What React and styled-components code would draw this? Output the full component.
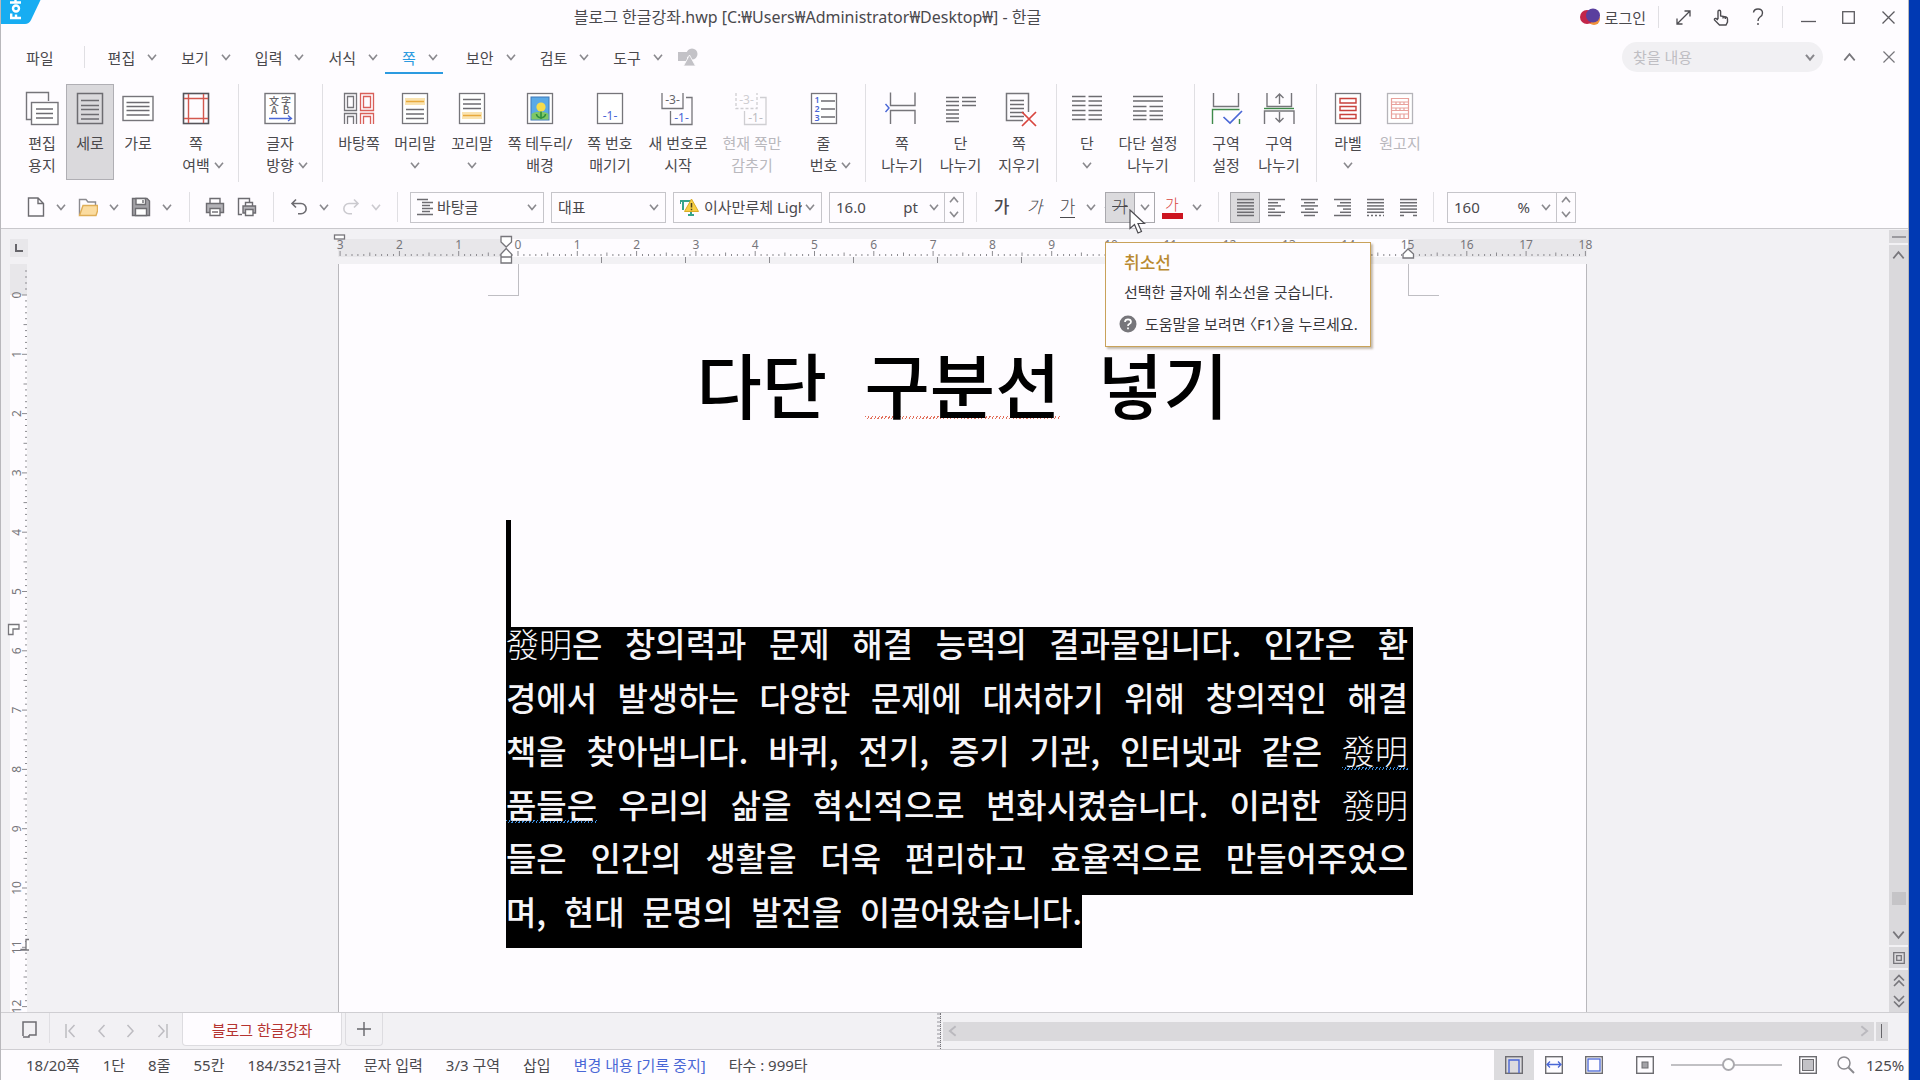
import React from "react";
import styled, { createGlobalStyle, css } from "styled-components";

const color = {
  chrome: "#fefcff",
  canvas: "#f2f1f4",
  line: "#d3d2d6",
  edge: "#b9b8bc",
  text: "#4a494d",
  faint: "#b9b8bd",
  icon: "#6d6c71",
  blue: "#2c9be0",
  ink: "#4a67d6",
  red: "#d8453e",
  track: "#dad9dc",
};

const GlobalStyle = createGlobalStyle`
  * { box-sizing: border-box; }
  body { margin: 0; background: #0039b3; overflow: hidden; }
  body, button, input, select {
    font-family: "Noto Sans", "Noto Sans CJK KR", sans-serif;
    font-size: 15px;
    color: ${color.text};
  }
  button, input, select { border: 0; margin: 0; padding: 0; background: none; outline: none; }
  svg { display: block; flex: none; }
`;

const Desktop = styled.div`
  height: 100vh;
  padding-right: 11px;
  background: #0039b3;
`;
const Window = styled.main`
  height: 100%;
  display: flex;
  flex-direction: column;
  background: ${color.chrome};
  border-left: 1px solid ${color.edge};
  border-right: 1px solid ${color.edge};
`;

/* ---------- title bar ---------- */
const TitleBar = styled.header`
  height: 34px;
  display: grid;
  grid-template-columns: 1fr auto 1fr;
  align-items: center;
`;
const AppTitle = styled.h1`
  margin: 0;
  padding-right: 294px;
  font-size: 16px;
  font-weight: 400;
  line-height: 32px;
  white-space: nowrap;
`;
const LogoLink = styled.a`
  align-self: start;
  width: 40px;
`;
const TitleTools = styled.div`
  display: flex;
  align-items: center;
  justify-content: flex-end;
`;
const IconButton = styled.button`
  display: flex;
  align-items: center;
  justify-content: center;
  width: ${(p) => p.$w || 39}px;
  height: ${(p) => p.$h || 30}px;
`;
const LoginButton = styled.button`
  display: flex;
  align-items: center;
  gap: 5px;
  padding-right: 12px;
`;
const Divider = styled.span`
  flex: none;
  width: 1px;
  height: ${(p) => p.$h || 22}px;
  margin: 0 ${(p) => p.$r || 0}px 0 ${(p) => p.$l || 0}px;
  background: #e0dfe3;
`;

/* ---------- menu bar ---------- */
const MenuBar = styled.nav`
  height: 49px;
  display: flex;
  align-items: center;
  padding: 0 0 3px 25px;
`;
const MenuItem = styled.button`
  position: relative;
  display: flex;
  align-items: center;
  gap: 12px;
  height: 34px;
  min-width: 64px;
  padding: 0 7px 0 17px;
  ${(p) =>
    p.$active &&
    css`
      color: ${color.blue};
      &::after {
        content: "";
        position: absolute;
        left: 0;
        right: 6px;
        bottom: 0;
        height: 2px;
        background: ${color.blue};
      }
    `}
`;
const FileItem = styled.button`
  padding-right: 30px;
  height: 34px;
`;
const SearchBox = styled.label`
  display: flex;
  align-items: center;
  width: 201px;
  height: 30px;
  margin: 0 6px 0 auto;
  padding: 0 8px 0 11px;
  border-radius: 15px;
  background: #f1f0f3;
`;
const SearchInput = styled.input`
  flex: 1;
  min-width: 0;
  &::placeholder { color: #bfbec3; opacity: 1; }
`;

/* ---------- ribbon ---------- */
const Ribbon = styled.div`
  height: 101px;
  display: flex;
  align-items: flex-start;
  padding: 1px 0 0 17px;
`;
const RibbonButton = styled.button`
  flex: none;
  width: ${(p) => p.$w}px;
  height: 96px;
  display: flex;
  flex-direction: column;
  align-items: center;
  padding-top: 5px;
  border: 1px solid ${(p) => (p.$on ? "#b0afb4" : "transparent")};
  background: ${(p) => (p.$on ? "#dad9dc" : "transparent")};
  color: ${(p) => (p.disabled ? color.faint : color.text)};
  white-space: nowrap;
`;
const RibbonLine = styled.span`
  display: flex;
  align-items: center;
  justify-content: center;
  gap: 4px;
  height: 22px;
  line-height: 22px;
  padding-left: ${(p) => (p.$hang ? 14 : 0)}px;
`;
const RibbonIcon = styled.svg`
  width: 34px;
  height: 36px;
  margin-bottom: 6px;
`;
const RibbonRule = styled.span`
  flex: none;
  width: 1px;
  height: 98px;
  margin: 0 7px 0 8px;
  background: #e0dfe3;
`;

/* ---------- format bar ---------- */
const FormatBar = styled.div`
  height: 45px;
  display: flex;
  align-items: center;
  padding: 2px 0 0 19px;
  border-bottom: 1px solid #c9c8cc;
`;
const ToolButton = styled.button`
  flex: none;
  display: flex;
  align-items: center;
  justify-content: center;
  width: ${(p) => p.$w}px;
  height: ${(p) => (p.$on || p.$split ? 31 : 30)}px;
  border: 1px solid ${(p) => (p.$on || p.$split ? "#a9a8ad" : "transparent")};
  border-left-width: ${(p) => (p.$split ? 0 : 1)}px;
  background: ${(p) => (p.$on ? "#dbdadd" : "transparent")};
  font-size: 17px;
  font-weight: ${(p) => p.$weight || 400};
  font-style: ${(p) => (p.$italic ? "italic" : "normal")};
  line-height: 20px;
`;
const Field = styled.label`
  flex: none;
  display: flex;
  align-items: center;
  gap: ${(p) => p.$gap || 4}px;
  width: ${(p) => p.$w}px;
  height: 31px;
  padding-left: 6px;
  margin-right: ${(p) => p.$r || 0}px;
  border: 1px solid #c6c5ca;
`;
const FieldSelect = styled.select`
  appearance: none;
  flex: 1;
  min-width: 0;
  height: 29px;
  white-space: nowrap;
  overflow: hidden;
  text-overflow: clip;
`;
const FieldInput = styled.input`
  flex: 1;
  min-width: 0;
`;
const Unit = styled.span`
  margin-right: 6px;
`;
const ChevronSlot = styled.span`
  display: flex;
  justify-content: center;
  flex: none;
  width: ${(p) => (p.$tight ? 12 : 22)}px;
  margin-left: ${(p) => (p.$tight ? 0 : -8)}px;
`;
const Spinner = styled.span`
  flex: none;
  display: flex;
  flex-direction: column;
  justify-content: space-around;
  width: 19px;
  height: 29px;
  border-left: 1px solid #c6c5ca;
`;
const SpinButton = styled.button`
  display: flex;
  justify-content: center;
`;
const UnderGlyph = styled.span`
  border-bottom: 1px solid ${color.text};
`;
const StrikeGlyph = styled.span`
  text-decoration: line-through;
`;
const ColorGlyph = styled.span`
  width: 21px;
  border-bottom: 6px solid #cc1420;
  color: ${color.red};
  font-size: 15px;
  line-height: 18px;
`;

/* ---------- workspace ---------- */
const Workspace = styled.section`
  flex: 1;
  min-height: 0;
  display: grid;
  grid-template-columns: 28px 1fr 19px;
  grid-template-rows: 35px 1fr;
  background: ${color.canvas};
`;
const Corner = styled.div`
  display: flex;
  align-items: flex-start;
  padding: 10px 0 0 9px;
`;
const RulerStrip = styled.div`
  display: flex;
  justify-content: center;
  padding-left: 7px;
  overflow: hidden;
`;
const SideRuler = styled.div`
  min-height: 0;
  overflow: hidden;
`;
const Canvas = styled.div`
  min-height: 0;
  display: flex;
  justify-content: center;
  padding-left: 7px;
  overflow: hidden;
`;
const Page = styled.article`
  width: 1249px;
  background: ${color.chrome};
  border-left: 1px solid ${color.edge};
  border-right: 1px solid ${color.edge};
`;
const MarginMarks = styled.div`
  display: flex;
  justify-content: space-between;
  padding: 0 147px 0 149px;
`;
const MarginMark = styled.span`
  width: 31px;
  height: 32px;
  border: solid #bfbec3;
  border-width: ${(p) => (p.$end ? "0 0 1px 1px" : "0 1px 1px 0")};
`;
const docFont = css`
  font-family: "Noto Sans CJK KR", sans-serif;
  font-weight: 500;
`;
const DocTitle = styled.h2`
  ${docFont}
  width: 532px;
  margin: 46px auto 98px;
  font-size: 71px;
  line-height: 80px;
  color: #000;
  text-align: justify;
  text-align-last: justify;
  white-space: nowrap;
`;
const Squiggle = styled.span`
  background: repeating-linear-gradient(
      120deg,
      ${(p) => p.$tone} 0 1px,
      transparent 1px 3px
    )
    0 ${(p) => p.$at} / 100% 3px no-repeat;
`;
const TextColumn = styled.div`
  width: 907px;
  margin-left: 167px;
`;
const Caret = styled.div`
  width: 5px;
  height: 107px;
  background: #000;
`;
const Paragraph = styled.div`
  ${docFont}
  height: 321px;
  display: grid;
  grid-template-rows: repeat(6, 1fr);
  font-size: 33px;
  line-height: 32px;
  color: #f6f5f8;
`;
const TextLine = styled.div`
  width: ${(p) => (p.$short ? "576px" : "100%")};
  padding-right: ${(p) => (p.$short ? 0 : 5)}px;
  background: #000;
  text-align: justify;
  text-align-last: justify;
  white-space: nowrap;
`;
const Hanja = styled.span`
  display: inline-block;
  font-weight: 300;
  text-align-last: left;
`;

/* ---------- vertical scroll ---------- */
const ScrollColumn = styled.aside`
  grid-column: 3;
  grid-row: 1 / 3;
  display: flex;
  flex-direction: column;
  gap: 2px;
  padding-top: 1px;
`;
const ScrollCell = styled.button`
  display: flex;
  align-items: center;
  justify-content: center;
  height: ${(p) => p.$h}px;
  background: ${color.track};
`;
const ScrollTrack = styled.div`
  flex: 1;
  display: flex;
  flex-direction: column;
  background: ${color.track};
`;
const ScrollThumb = styled.span`
  width: 14px;
  height: 13px;
  margin: auto auto 18px;
  background: #c5c4c7;
`;
const PageSteps = styled.div`
  display: flex;
  flex-direction: column;
  background: ${color.track};
`;

/* ---------- tab strip ---------- */
const TabStrip = styled.div`
  height: 38px;
  display: grid;
  grid-template-columns: 936px 1fr;
  background: ${color.canvas};
  border-top: 1px solid #cfced2;
  border-bottom: 1px solid #cfced2;
`;
const TabGroup = styled.div`
  display: flex;
  align-items: flex-start;
  padding-left: 10px;
`;
const DocTab = styled.button`
  width: 160px;
  height: 33px;
  margin: 0 3px 0 5px;
  padding-top: 1px;
  border: 1px solid #dddce0;
  border-top: 0;
  border-radius: 0 0 4px 4px;
  background: ${color.chrome};
  color: #b53431;
`;
const AddTab = styled.button`
  display: flex;
  align-items: center;
  justify-content: center;
  width: 38px;
  height: 33px;
  border: 1px solid #dddce0;
  border-top: 0;
  border-radius: 0 0 4px 4px;
`;
const ScrollRow = styled.div`
  display: flex;
  align-items: center;
  padding-right: 20px;
`;
const Grip = styled.span`
  width: 4px;
  height: 36px;
  margin-right: 2px;
  background: repeating-linear-gradient(180deg, #c3c2c7 0 2px, ${color.canvas} 2px 4px);
  border-right: 1px dotted #77767b;
`;
const HScroll = styled.div`
  flex: 1;
  display: flex;
  justify-content: space-between;
  align-items: center;
  height: 19px;
  background: ${color.track};
`;
const SplitHandle = styled.button`
  display: flex;
  align-items: center;
  justify-content: center;
  width: 12px;
  height: 19px;
  margin-left: 2px;
  background: ${color.track};
`;

/* ---------- status bar ---------- */
const StatusBar = styled.footer`
  height: 30px;
  display: flex;
  align-items: center;
  padding-left: 25px;
`;
const StatusList = styled.div`
  display: flex;
  gap: 23px;
  line-height: 30px;
  white-space: nowrap;
`;
const StatusText = styled.span`
  color: ${(p) => (p.$link ? "#4a67d6" : color.text)};
`;
const StatusTools = styled.div`
  display: flex;
  align-items: center;
  margin-left: auto;
  padding-right: 4px;
`;
const ViewButton = styled.button`
  display: flex;
  align-items: center;
  justify-content: center;
  width: ${(p) => p.$w || 40}px;
  height: 30px;
  background: ${(p) => (p.$on ? "#dcdbde" : "transparent")};
`;
const ZoomSlider = styled.input`
  appearance: none;
  width: 111px;
  height: 14px;
  margin: 0 8px 0 -5px;
  &::-webkit-slider-runnable-track { height: 2px; background: #c1c0c4; }
  &::-webkit-slider-thumb {
    appearance: none;
    width: 13px;
    height: 13px;
    margin-top: -6px;
    border: 2px solid #aaa9ae;
    border-radius: 50%;
    background: #fff;
  }
`;
const ZoomLabel = styled.output`
  width: 38px;
`;

/* ---------- tooltip and pointer ---------- */
const Anchor = styled.span`
  position: relative;
  display: flex;
`;
const Tooltip = styled.div`
  position: absolute;
  z-index: 2;
  top: 50px;
  left: 0;
  width: 266px;
  height: 105px;
  padding: 7px 12px 0 18px;
  border: 1px solid #c9a25a;
  background: ${color.chrome};
  box-shadow: 2px 2px 2px rgba(90, 70, 30, 0.35);
  line-height: 26px;
  white-space: nowrap;
`;
const TipTitle = styled.strong`
  display: block;
  font-size: 17px;
  font-weight: 500;
  color: #b98a30;
`;
const TipBody = styled.p`
  margin: 3px 0 6px;
  color: #38373a;
`;
const TipHelp = styled.p`
  display: flex;
  align-items: center;
  gap: 8px;
  margin: 0 0 0 -5px;
  color: #38373a;
  font-feature-settings: "halt";
`;
const Pointer = styled.svg`
  position: absolute;
  z-index: 3;
  top: 17px;
  left: 24px;
`;

/* ---------- shared glyphs ---------- */
const Chevron = ({ dir = "down", size = 10, tone = "#8a898e", weight = 1.6 }) => {
  const turn = { down: 0, left: 90, up: 180, right: 270 }[dir];
  return (
    <svg width={size} height={size} viewBox="0 0 10 10" fill="none" stroke={tone} strokeWidth={weight}>
      <path d="M1 2.8 L5 7.6 L9 2.8" transform={`rotate(${turn} 5 5)`} />
    </svg>
  );
};
const Cross = ({ size = 13, tone = "#5c5b60" }) => (
  <svg width={size} height={size} viewBox="0 0 13 13" stroke={tone} strokeWidth="1.3">
    <path d="M0.5 0.5 L12.5 12.5 M12.5 0.5 L0.5 12.5" />
  </svg>
);

const Rows = ({ x1, x2, ys, tone = color.icon }) => (
  <path d={ys.map((y) => `M${x1} ${y}H${x2}`).join("")} stroke={tone} strokeWidth="1.5" fill="none" />
);
const Sheet = ({ tone = "#76757a" }) => (
  <rect x="4.5" y="3.5" width="25" height="30" fill="#fff" stroke={tone} strokeWidth="1.3" />
);
const numeral = { fontSize: 12, fontFamily: "Noto Sans", textAnchor: "middle", stroke: "none" };

const ribbonArt = {
  paper: (
    <g fill="none" stroke="#76757a" strokeWidth="1.4">
      <path d="M7 29.5H1.5V2.5H23.5V11" />
      <rect x="6.5" y="12.5" width="26.5" height="22" fill="#fff" />
      <Rows x1={11} x2={28} ys={[19, 23.5, 28]} />
    </g>
  ),
  portrait: (
    <g>
      <rect x="4.5" y="3.5" width="25" height="30" fill="#dad9dc" stroke={color.icon} strokeWidth="1.5" />
      <Rows x1={8} x2={26} ys={[10.5, 15.5, 19.5, 24.5, 29]} />
    </g>
  ),
  landscape: (
    <g>
      <rect x="2" y="6.5" width="30" height="24" fill="#fff" stroke="#76757a" strokeWidth="1.4" />
      <Rows x1={5.5} x2={28.5} ys={[12.5, 16.5, 20.5, 25]} />
    </g>
  ),
  margins: (
    <g fill="none">
      <rect x="4.5" y="3.5" width="25" height="30" stroke="#55545a" strokeWidth="1.6" />
      <path d="M9.5 4V33M24.5 4V33M5 8.5H29M5 28.5H29" stroke="#d3584f" strokeWidth="1.4" />
    </g>
  ),
  direction: (
    <g>
      <rect x="2" y="3.5" width="30" height="30" fill="#fff" stroke="#76757a" strokeWidth="1.4" />
      <g style={{ fontSize: 10, fontFamily: "Noto Sans CJK KR", fontWeight: 500 }} fill="#66656a" textAnchor="middle">
        <text x="11" y="14.5">文</text>
        <text x="23" y="14.5">字</text>
        <text x="11" y="24">A</text>
        <text x="23" y="24">B</text>
      </g>
      <path d="M6 28.5H28M25 25.5L28.5 28.5L25 31" fill="none" stroke={color.ink} strokeWidth="1.3" />
    </g>
  ),
  master: (
    <g fill="none" strokeWidth="1.3">
      <g stroke="#76757a">
        <path d="M2.5 3.5H14.5V20.5H2.5ZM5.5 6.5H11.5V17.5H5.5ZM2.5 34V23.5H14.5V34M5.5 34V26.5H11.5V34" />
      </g>
      <g stroke="#d9605a">
        <path d="M18.5 3.5H31.5V20.5H18.5ZM21.5 6.5H28.5V17.5H21.5ZM18.5 34V23.5H31.5V34M21.5 34V26.5H28.5V34" />
      </g>
    </g>
  ),
  header: (
    <g>
      <Sheet />
      <rect x="7" y="8" width="20" height="7" fill="#fae3b0" />
      <Rows x1={8} x2={26} ys={[11.5]} tone="#e8a93c" />
      <Rows x1={8} x2={26} ys={[19.5, 24, 28.5]} />
    </g>
  ),
  footer: (
    <g>
      <Sheet />
      <rect x="7" y="22" width="20" height="7" fill="#fae3b0" />
      <Rows x1={8} x2={26} ys={[25.5]} tone="#e8a93c" />
      <Rows x1={8} x2={26} ys={[9.5, 14, 18.5]} />
    </g>
  ),
  frame: (
    <g>
      <Sheet />
      <rect x="8" y="7" width="18" height="23" fill="#5aa9e6" stroke="#3f78b8" />
      <path d="M8.5 24C12 21 22 21 25.5 24V29.5H8.5Z" fill="#7fc766" />
      <path d="M18 19V29M18 28C14 27 13.5 24.5 13.5 24M18 28C22 27 22.5 24.5 22.5 24" stroke="#2f8f3d" strokeWidth="1.6" fill="none" />
      <circle cx="18" cy="17" r="4.6" fill="#f7dc4b" />
    </g>
  ),
  pageNo: (
    <g>
      <Sheet />
      <text x="17" y="30" fill={color.ink} style={numeral}>-1-</text>
    </g>
  ),
  newNo: (
    <g fill="none" stroke="#76757a" strokeWidth="1.3">
      <path d="M1 3V18.5H22V3M25 7.5H31V34.5H9.5V21" />
      <text x="11.5" y="14" fill="#66656a" style={numeral}>-3-</text>
      <text x="20.5" y="31.5" fill={color.ink} style={numeral}>-1-</text>
    </g>
  ),
  hideNo: (
    <g fill="none" stroke="#cfced2" strokeWidth="1.3">
      <path d="M1 3V18.5H22V3" strokeDasharray="3 2" />
      <path d="M25 7.5H31V34.5H9.5V21" />
      <text x="11.5" y="14" fill="#cfced2" style={numeral}>-3-</text>
      <text x="20.5" y="31.5" fill="#bdbcc1" style={numeral}>-1-</text>
    </g>
  ),
  lineNo: (
    <g>
      <Sheet />
      <g fill={color.ink} style={{ ...numeral, fontSize: 9, fontWeight: 600 }}>
        <text x="10" y="13">1</text>
        <text x="10" y="22">2</text>
        <text x="10" y="31">3</text>
      </g>
      <Rows x1={14} x2={28} ys={[11, 19, 27]} />
    </g>
  ),
  pageBreak: (
    <g fill="none" stroke="#76757a" strokeWidth="1.4">
      <path d="M5.5 2.5V15.5H30V2.5M5.5 34V20.5H30V34" />
      <path d="M0.5 14L4 18L0.5 22" stroke={color.ink} />
    </g>
  ),
  columnBreak: (
    <g>
      <Rows x1={2} x2={15} ys={[7.5, 11.5, 15.5, 20, 24, 28, 31.5]} />
      <Rows x1={18} x2={32} ys={[7.5, 11.5, 15.5]} />
    </g>
  ),
  erase: (
    <g fill="none">
      <path d="M21 30.5H4.5V3.5H26.5V22" stroke="#76757a" strokeWidth="1.5" />
      <Rows x1={8} x2={22} ys={[10.5, 14.5, 18.5, 22.5, 26.5]} />
      <path d="M20 22L34 36M34 22L20 36" stroke={color.red} strokeWidth="1.7" />
    </g>
  ),
  columns: (
    <g>
      <Rows x1={2} x2={15.5} ys={[6.5, 11, 15.5, 20.5, 25, 29.5]} />
      <Rows x1={18.5} x2={32} ys={[6.5, 11, 15.5, 20.5, 25, 29.5]} />
    </g>
  ),
  columnSet: (
    <g>
      <Rows x1={2} x2={32} ys={[6.5, 11]} />
      <Rows x1={2} x2={15.5} ys={[16.5, 21, 25.5, 29.5]} />
      <Rows x1={18.5} x2={32} ys={[16.5, 21, 25.5, 29.5]} />
    </g>
  ),
  sectionSet: (
    <g fill="none" strokeWidth="1.4">
      <path d="M4.5 3V16.5H29.5V3" stroke="#76757a" />
      <path d="M3.5 34V19.5H30.5M30.5 29V34" stroke="#3f8a4a" />
      <path d="M14.5 27L21 33L33 21" stroke={color.ink} strokeWidth="1.7" />
    </g>
  ),
  sectionBreak: (
    <g fill="none" stroke="#76757a" strokeWidth="1.4">
      <path d="M5 3V16.5H29.5V3M2.5 34V21H32V34" />
      <path d="M2 18.5H32" stroke="#3f8a4a" />
      <path d="M17.5 14V4M13.5 8L17.5 4L21.5 8M17.5 22V32M13.5 28L17.5 32L21.5 28" />
    </g>
  ),
  label: (
    <g>
      <Sheet />
      <path d="M9 8.5H25V13H9ZM9 16.5H25V20.5H9ZM9 24.5H25V28.5H9Z" fill="none" stroke="#c8423c" strokeWidth="1.4" />
    </g>
  ),
  manuscript: (
    <g>
      <Sheet tone="#b5b4b9" />
      <path
        d="M8.5 8.5H25.5V28.5H8.5ZM8.5 12H25.5M8.5 14.5H25.5M8.5 18H25.5M8.5 20.5H25.5M8.5 24H25.5M13 12V14.5M17 12V14.5M21 12V14.5M13 18V20.5M17 18V20.5M21 18V20.5M13 24V28.5M17 24V28.5M21 24V28.5"
        fill="none"
        stroke="#e8a19c"
        strokeWidth="1.2"
      />
    </g>
  ),
};

const ribbonGroups = [
  [
    { art: "paper", w: 48, lines: ["편집", "용지"] },
    { art: "portrait", w: 48, lines: ["세로"], on: true },
    { art: "landscape", w: 48, lines: ["가로"] },
    { art: "margins", w: 68, lines: ["쪽", "여백"], menu: true },
  ],
  [{ art: "direction", w: 68, lines: ["글자", "방향"], menu: true }],
  [
    { art: "master", w: 58, lines: ["바탕쪽"] },
    { art: "header", w: 54, lines: ["머리말", ""], menu: true },
    { art: "footer", w: 60, lines: ["꼬리말", ""], menu: true },
    { art: "frame", w: 76, lines: ["쪽 테두리/", "배경"] },
    { art: "pageNo", w: 64, lines: ["쪽 번호", "매기기"] },
    { art: "newNo", w: 72, lines: ["새 번호로", "시작"] },
    { art: "hideNo", w: 76, lines: ["현재 쪽만", "감추기"], off: true },
    { art: "lineNo", w: 67, lines: ["줄", "번호"], menu: true },
  ],
  [
    { art: "pageBreak", w: 58, lines: ["쪽", "나누기"] },
    { art: "columnBreak", w: 59, lines: ["단", "나누기"] },
    { art: "erase", w: 58, lines: ["쪽", "지우기"] },
  ],
  [
    { art: "columns", w: 46, lines: ["단", ""], menu: true },
    { art: "columnSet", w: 76, lines: ["다단 설정", "나누기"] },
  ],
  [
    { art: "sectionSet", w: 48, lines: ["구역", "설정"] },
    { art: "sectionBreak", w: 58, lines: ["구역", "나누기"] },
  ],
  [
    { art: "label", w: 48, lines: ["라벨", ""], menu: true },
    { art: "manuscript", w: 56, lines: ["원고지"], off: true },
  ],
];

const RibbonItem = ({ item }) => (
  <RibbonButton type="button" $w={item.w} $on={item.on} disabled={item.off}>
    <RibbonIcon viewBox="0 0 34 36" overflow="visible">{ribbonArt[item.art]}</RibbonIcon>
    {item.lines.map((line, i) => (
      <RibbonLine key={i} $hang={item.menu && i === 1 && line !== ""}>
        {line}
        {item.menu && i === 1 && <Chevron />}
      </RibbonLine>
    ))}
  </RibbonButton>
);

/* ---------- format bar art ---------- */
const Art = ({ w = 20, h = 20, children }) => (
  <svg width={w} height={h} viewBox={`0 0 ${w} ${h}`} fill="none" stroke={color.icon} strokeWidth="1.4">
    {children}
  </svg>
);
const NewIcon = () => (
  <Art><path d="M2.5 1H12L17.5 6.5V19H2.5ZM12 1V6.5H17.5" /></Art>
);
const OpenIcon = () => (
  <Art>
    <path d="M1.5 18V2.5H8L10 5H17.5V8" stroke="#8b8a8f" />
    <path d="M1.5 18.5L5 8.5H19.5V14L18 18.5Z" fill="#fbdca0" stroke="#dfae57" />
  </Art>
);
const SaveIcon = () => (
  <Art>
    <path d="M1.5 1.5H16L18.5 4V18.5H1.5Z" fill="#a3a2a7" />
    <path d="M5 1.5H14.5V7.5H5ZM4.5 11.5H15.5V18.5H4.5Z" fill="#fff" />
    <path d="M12 3V6" />
  </Art>
);
const PrintIcon = () => (
  <Art>
    <path d="M5 6.5V1.5H15V6.5" />
    <path d="M1.5 6.5H18.5V15.5H1.5Z" fill="#b3b2b7" />
    <path d="M5 11.5H15V18.5H5Z" fill="#fff" />
    <path d="M7 15H13" />
  </Art>
);
const PreviewIcon = () => (
  <Art>
    <path d="M5 17.5H1.5V1.5H12.5V5" />
    <path d="M8.5 9V5.5H15.5V9" />
    <path d="M6 9H18.5V16H6Z" fill="#b3b2b7" />
    <path d="M8.5 12.5H16V18.5H8.5Z" fill="#fff" />
  </Art>
);
const UndoIcon = ({ flip, tone }) => (
  <svg width="18" height="18" viewBox="0 0 18 18" fill="none" stroke={tone} strokeWidth="1.6">
    <path transform={flip ? "translate(18 0) scale(-1 1)" : undefined} d="M6 1.5L2 5.5L6 9.5M2 5.5H11A5 5 0 0 1 11 15.8H8" />
  </svg>
);
const alignKinds = [
  { name: "양쪽 정렬", rows: [[1, 18], [1, 18], [1, 18], [1, 18], [1, 18], [1, 18]] },
  { name: "왼쪽 정렬", rows: [[1, 18], [1, 11], [1, 14], [1, 8], [1, 18], [1, 14]] },
  { name: "가운데 정렬", rows: [[1, 18], [4, 15], [1, 18], [5, 14], [1, 18], [4, 15]] },
  { name: "오른쪽 정렬", rows: [[1, 18], [7, 18], [4, 18], [10, 18], [7, 18], [1, 18]] },
  { name: "배분 정렬", rows: [[1, 18], [1, 18], [1, 18], [1, 18], [1, 18]], dots: "2 2" },
  { name: "나눔 정렬", rows: [[1, 18], [1, 18], [1, 18], [1, 18], [1, 18]], dots: "4 9" },
];
const AlignIcon = ({ kind }) => (
  <svg width="19" height="19" viewBox="0 0 19 19" stroke={color.icon} strokeWidth="1.5">
    {kind.rows.map(([a, b], i) => (
      <path key={i} d={`M${a} ${1.5 + i * 3.2}H${b}`} />
    ))}
    {kind.dots && <path d="M1 17.5H18" strokeDasharray={kind.dots} />}
  </svg>
);

const MenuChevron = ({ w = 22, label, tone }) => (
  <ToolButton type="button" $w={w} aria-label={label}>
    <Chevron tone={tone} />
  </ToolButton>
);

/* ---------- rulers ---------- */
const UNIT = 59.3;
const tickPath = (from, to, origin, vertical) => {
  const parts = [];
  for (let n = from * 10; n <= to * 10; n += 1) {
    const pos = (origin + (n * UNIT) / 10).toFixed(1);
    const len = n % 10 === 0 ? 5 : n % 5 === 0 ? 3.5 : 2;
    parts.push(vertical ? `M${26 - len} ${pos}h${len}` : `M${pos} ${27 - len}v${len}`);
  }
  return parts.join("");
};
const range = (a, b) => Array.from({ length: b - a + 1 }, (_, i) => a + i);
const rulerText = { fontSize: 12, fontFamily: "Noto Sans", textAnchor: "middle" };

const TopRuler = () => (
  <svg width="1263" height="35" viewBox="0 0 1263 35">
    <rect x="7" y="10" width="1249" height="18" fill="#e8e7ea" />
    <rect x="175" y="10" width="902" height="18" fill={color.chrome} />
    <path d={tickPath(-3, 18, 187, false)} stroke="#8d8c91" strokeWidth="1" />
    <g fill="#77767b" style={rulerText}>
      {range(-3, 18).map((n) => (
        <text key={n} x={187 + n * UNIT} y="20">{Math.abs(n)}</text>
      ))}
    </g>
    <path d={range(0, 8).map((n) => `M${270.5 + n * 84} 28v6`).join("")} stroke="#8d8c91" />
    <g fill="#fff" stroke="#77767b" strokeWidth="1.3">
      <rect x="3.5" y="6" width="10" height="4" />
      <path d="M170 7.5H180.5V13L175.2 18L170 13Z" />
      <path d="M170 34V25L175.2 19.5L180.5 25V34ZM170 28H180.5" />
      <path d="M1072 29V25L1077 20L1082.5 25V29Z" />
    </g>
  </svg>
);

const LeftRuler = () => (
  <svg width="30" height="1600" viewBox="0 0 30 1600">
    <rect x="9" y="0" width="17" height="1600" fill={color.chrome} />
    <rect x="9" y="0" width="17" height="31" fill="#e8e7ea" />
    <path d={tickPath(0, 12, 31, true) + "M24 7h2M24 13h2M24 19h2M24 25h2"} stroke="#8d8c91" />
    <g fill="#77767b" style={rulerText}>
      {range(0, 12).map((n) => (
        <text key={n} transform={`translate(20 ${31 + n * UNIT}) rotate(-90)`}>{n}</text>
      ))}
    </g>
    <g fill="#fff" stroke="#77767b" strokeWidth="1.3">
      <path d="M7.5 360.5H18V365H12V370.5H7.5Z" />
      <path d="M20 685.5H25V675.5H29V686H20Z" />
    </g>
  </svg>
);

const GlyphSquare = ({ children }) => (
  <svg width="18" height="18" viewBox="0 0 18 18" fill="none">
    <rect x="0.7" y="0.7" width="16.6" height="16.6" stroke={color.icon} strokeWidth="1.4" />
    {children}
  </svg>
);
const DoubleChevron = ({ up }) => (
  <svg width="12" height="13" viewBox="0 0 12 13" fill="none" stroke="#77767b" strokeWidth="1.6">
    <path transform={up ? undefined : "rotate(180 6 6.5)"} d="M1 6.5L6 1.5L11 6.5M1 12L6 7L11 12" />
  </svg>
);
const NavArrow = ({ dir, end }) => (
  <svg width="12" height="18" viewBox="0 0 12 18" fill="none" stroke="#bdbcc1" strokeWidth="1.5">
    <g transform={dir === "right" ? "translate(12 0) scale(-1 1)" : undefined}>
      <path d="M9.5 3L4 9L9.5 15" />
      {end && <path d="M1 2V16" />}
    </g>
  </svg>
);

const menus = ["편집", "보기", "입력", "서식", "쪽", "보안", "검토", "도구"];
const status = ["18/20쪽", "1단", "8줄", "55칸", "184/3521글자", "문자 입력", "3/3 구역", "삽입"];

export default function App() {
  return (
    <>
      <GlobalStyle />
      <Desktop>
        <Window>
          <TitleBar>
            <LogoLink href="#home" aria-label="홈">
              <svg width="40" height="34" viewBox="0 0 40 34">
                <path d="M0 0H39.5L30 20Q28 24 24 24H0Z" fill="#17adf2" />
                <g fill="none" stroke="#fff" strokeWidth="2.4">
                  <path d="M9 18H20M10.2 18V13.5M15 18V14.5" />
                  <circle cx="15" cy="8.5" r="3" />
                  <path d="M9 2.5H20M14.5 2.5V0" />
                </g>
              </svg>
            </LogoLink>
            <AppTitle>블로그 한글강좌.hwp [C:₩Users₩Administrator₩Desktop₩] - 한글</AppTitle>
            <TitleTools>
              <LoginButton type="button">
                <svg width="20" height="18" viewBox="0 0 20 18">
                  <circle cx="14" cy="11" r="6" fill="#f0923b" />
                  <circle cx="7" cy="9" r="7" fill="#c2254a" />
                  <circle cx="13" cy="7.5" r="7" fill="#5a3f9e" />
                </svg>
                로그인
              </LoginButton>
              <Divider $r={4} />
              <IconButton type="button" $w={40} aria-label="전체 화면">
                <svg width="15" height="15" viewBox="0 0 15 15" fill="none" stroke="#4d4c51" strokeWidth="1.3">
                  <path d="M1 14L14 1M8.5 1H14V6.5M1 8.5V14H6.5" />
                </svg>
              </IconButton>
              <IconButton type="button" $w={35} aria-label="터치">
                <svg width="16" height="17" viewBox="0 0 16 17" fill="none" stroke="#4d4c51" strokeWidth="1.4">
                  <path d="M5 10V2.5A1.3 1.3 0 0 1 7.6 2.5V7L13 8Q14.5 8.5 14.5 10V13L13 16H6.5L1.5 11Q1 9 3 9.5L5 11M10 7.5V9.5M12.3 8V10" />
                </svg>
              </IconButton>
              <IconButton type="button" $w={39} aria-label="도움말">
                <svg width="12" height="18" viewBox="0 0 12 18" fill="none" stroke="#4d4c51" strokeWidth="1.4">
                  <path d="M1.5 4.5Q2 1 6 1Q10.5 1 10.5 5Q10.5 7.5 8 9Q6 10.3 6 13M6 15V17" />
                </svg>
              </IconButton>
              <Divider $r={6} $l={5} />
              <IconButton type="button" aria-label="최소화">
                <svg width="15" height="14" viewBox="0 0 15 14" stroke="#5c5b60" strokeWidth="1.3">
                  <path d="M0 11.5H15" />
                </svg>
              </IconButton>
              <IconButton type="button" $w={41} aria-label="최대화">
                <svg width="13" height="13" viewBox="0 0 13 13" fill="none" stroke="#5c5b60" strokeWidth="1.3">
                  <rect x="0.7" y="0.7" width="11.6" height="11.6" />
                </svg>
              </IconButton>
              <IconButton type="button" aria-label="닫기"><Cross /></IconButton>
            </TitleTools>
          </TitleBar>

          <MenuBar>
            <FileItem type="button">파일</FileItem>
            <Divider $r={6} />
            {menus.map((name) => (
              <MenuItem key={name} type="button" $active={name === "쪽"}>
                {name}
                <Chevron />
              </MenuItem>
            ))}
            <IconButton type="button" $w={36} aria-label="도형">
              <svg width="20" height="18" viewBox="0 0 20 18" fill="#c3c2c7">
                <circle cx="14" cy="6" r="5.5" />
                <path d="M0 4H9V13H0Z" />
                <path d="M11.5 7L17.5 18H5.5Z" stroke={color.chrome} strokeWidth="0.8" />
              </svg>
            </IconButton>
            <SearchBox>
              <SearchInput aria-label="찾을 내용" placeholder="찾을 내용" />
              <Chevron tone="#88878c" weight={2} />
            </SearchBox>
            <IconButton type="button" $w={40} aria-label="리본 접기"><Chevron dir="up" size={13} tone="#77767b" weight={1.3} /></IconButton>
            <IconButton type="button" $w={39} aria-label="문서 닫기"><Cross size={12} tone="#77767b" /></IconButton>
          </MenuBar>

          <Ribbon>
            {ribbonGroups.map((group, i) => (
              <React.Fragment key={i}>
                {i > 0 && <RibbonRule />}
                {group.map((item) => <RibbonItem key={item.art} item={item} />)}
              </React.Fragment>
            ))}
          </Ribbon>

          <FormatBar>
            <ToolButton type="button" $w={32} aria-label="새 문서"><NewIcon /></ToolButton>
            <MenuChevron w={18} label="새 문서 메뉴" />
            <ToolButton type="button" $w={36} aria-label="불러오기"><OpenIcon /></ToolButton>
            <MenuChevron w={16} label="불러오기 메뉴" />
            <ToolButton type="button" $w={38} aria-label="저장하기"><SaveIcon /></ToolButton>
            <MenuChevron w={14} label="저장하기 메뉴" />
            <Divider $h={30} $l={15} $r={9} />
            <ToolButton type="button" $w={32} aria-label="인쇄"><PrintIcon /></ToolButton>
            <ToolButton type="button" $w={32} aria-label="미리 보기"><PreviewIcon /></ToolButton>
            <Divider $h={30} $l={10} $r={9} />
            <ToolButton type="button" $w={32} aria-label="되돌리기"><UndoIcon tone="#6d6c71" /></ToolButton>
            <MenuChevron w={18} label="되돌리기 메뉴" />
            <ToolButton type="button" $w={36} aria-label="다시 실행"><UndoIcon flip tone="#cbcacf" /></ToolButton>
            <MenuChevron w={14} label="다시 실행 메뉴" tone="#cbcacf" />
            <Divider $h={30} $l={14} $r={12} />
            <Field $w={134} $r={7}>
              <svg width="16" height="18" viewBox="0 0 16 18" stroke={color.icon} strokeWidth="1.4">
                <path d="M0 1.5H11M5 4.5H16M5 7.5H13M5 10.5H16M5 13.5H13M0 16.5H16" />
              </svg>
              <FieldSelect aria-label="스타일" defaultValue="a"><option value="a">바탕글</option></FieldSelect>
              <ChevronSlot><Chevron /></ChevronSlot>
            </Field>
            <Field $w={115} $r={7}>
              <FieldSelect aria-label="언어" defaultValue="a"><option value="a">대표</option></FieldSelect>
              <ChevronSlot><Chevron /></ChevronSlot>
            </Field>
            <Field $w={149} $r={7} $gap={5}>
              <svg width="19" height="19" viewBox="0 0 19 19">
                <path d="M0 3H10V7M3 3V12M8 17H14M11 12V17M0 3V6" stroke="#35a38b" strokeWidth="2" fill="none" />
                <path d="M11.5 1L18.5 13.5H4.5Z" fill="#f7cf45" stroke="#d9ab26" />
                <path d="M11.5 5V9.5M11.5 10.8V12.3" stroke="#4d4420" strokeWidth="1.5" />
              </svg>
              <FieldSelect aria-label="글꼴" defaultValue="a"><option value="a">이사만루체 Light</option></FieldSelect>
              <ChevronSlot><Chevron /></ChevronSlot>
            </Field>
            <Field $w={135} $r={12}>
              <FieldInput aria-label="글자 크기" defaultValue="16.0" />
              <Unit>pt</Unit>
              <ChevronSlot $tight><Chevron /></ChevronSlot>
              <Spinner>
                <SpinButton type="button" aria-label="글자 크게"><Chevron dir="up" /></SpinButton>
                <SpinButton type="button" aria-label="글자 작게"><Chevron /></SpinButton>
              </Spinner>
            </Field>
            <Divider $h={30} $r={8} />
            <ToolButton type="button" $w={33} $weight={500}>가</ToolButton>
            <ToolButton type="button" $w={33} $weight={300} $italic>가</ToolButton>
            <ToolButton type="button" $w={33} $weight={300}><UnderGlyph>가</UnderGlyph></ToolButton>
            <MenuChevron w={14} label="밑줄 메뉴" />
            <Divider $h={1} $l={6} />
            <Anchor>
              <ToolButton type="button" $w={30} $weight={300} $on aria-describedby="strike-tip"><StrikeGlyph>가</StrikeGlyph></ToolButton>
              <ToolButton type="button" $w={20} $split aria-label="취소선 메뉴"><Chevron /></ToolButton>
              <Tooltip role="tooltip" id="strike-tip">
                <TipTitle>취소선</TipTitle>
                <TipBody>선택한 글자에 취소선을 긋습니다.</TipBody>
                <TipHelp>
                  <svg width="18" height="18" viewBox="0 0 18 18">
                    <circle cx="9" cy="9" r="8.5" fill="#77767b" />
                    <path d="M6 7Q6 4.3 9 4.3Q12 4.3 12 6.8Q12 8.3 10.3 9Q9 9.6 9 11M9 12.5V14.3" stroke="#fff" strokeWidth="1.7" fill="none" />
                  </svg>
                  <span>도움말을 보려면 〈F1〉을 누르세요.</span>
                </TipHelp>
              </Tooltip>
              <Pointer width="17" height="26" viewBox="0 0 17 26">
                <path d="M1 1V19.5L5.5 15.5L9 24L12.5 22.5L9 14.5H15.5Z" fill="#fff" stroke="#4d4c51" strokeWidth="1.2" />
              </Pointer>
            </Anchor>
            <ToolButton type="button" $w={34} $weight={300} aria-label="글자 색"><ColorGlyph>가</ColorGlyph></ToolButton>
            <MenuChevron w={16} label="글자 색 메뉴" />
            <Divider $h={30} $l={13} $r={11} />
            {alignKinds.map((kind, i) => (
              <ToolButton key={kind.name} type="button" $w={i === 0 ? 30 : 33} $on={i === 0} aria-label={kind.name}>
                <AlignIcon kind={kind} />
              </ToolButton>
            ))}
            <Divider $h={30} $l={8} $r={13} />
            <Field $w={129}>
              <FieldInput aria-label="줄 간격" defaultValue="160" />
              <Unit>%</Unit>
              <ChevronSlot $tight><Chevron /></ChevronSlot>
              <Spinner>
                <SpinButton type="button" aria-label="줄 간격 넓게"><Chevron dir="up" /></SpinButton>
                <SpinButton type="button" aria-label="줄 간격 좁게"><Chevron /></SpinButton>
              </Spinner>
            </Field>
          </FormatBar>

          <Workspace>
            <Corner>
              <svg width="18" height="18" viewBox="0 0 18 18">
                <rect width="18" height="18" fill="#e8e7ea" />
                <path d="M6 5V12H13" fill="none" stroke="#66656a" strokeWidth="2" />
              </svg>
            </Corner>
            <RulerStrip><TopRuler /></RulerStrip>
            <ScrollColumn>
              <ScrollCell type="button" $h={13} aria-label="창 나누기">
                <svg width="14" height="2"><rect width="14" height="2" fill="#9b9a9f" /></svg>
              </ScrollCell>
              <ScrollTrack>
                <ScrollCell type="button" $h={20} aria-label="위로"><Chevron dir="up" size={13} tone="#77767b" weight={1.3} /></ScrollCell>
                <ScrollThumb />
                <ScrollCell type="button" $h={22} aria-label="아래로"><Chevron size={13} tone="#77767b" weight={1.3} /></ScrollCell>
              </ScrollTrack>
              <ScrollCell type="button" $h={21} aria-label="이동 단위">
                <svg width="12" height="12" viewBox="0 0 12 12" fill="none" stroke="#77767b" strokeWidth="1.3">
                  <path d="M0.7 0.7H11.3V11.3H0.7ZM3.7 3.7H8.3V8.3H3.7Z" />
                </svg>
              </ScrollCell>
              <PageSteps>
                <ScrollCell type="button" $h={21} aria-label="이전 쪽"><DoubleChevron up /></ScrollCell>
                <ScrollCell type="button" $h={21} aria-label="다음 쪽"><DoubleChevron /></ScrollCell>
              </PageSteps>
            </ScrollColumn>
            <SideRuler><LeftRuler /></SideRuler>
            <Canvas>
              <Page>
                <MarginMarks><MarginMark /><MarginMark $end /></MarginMarks>
                <DocTitle>
                  다단 <Squiggle $tone="#e2705c" $at="86%">구분선</Squiggle> 넣기
                </DocTitle>
                <TextColumn>
                  <Caret />
                  <Paragraph>
                    <TextLine><Hanja>發明</Hanja>은 창의력과 문제 해결 능력의 결과물입니다. 인간은 환</TextLine>
                    <TextLine>경에서 발생하는 다양한 문제에 대처하기 위해 창의적인 해결</TextLine>
                    <TextLine>
                      책을 찾아냅니다. 바퀴, 전기, 증기 기관, 인터넷과 같은{" "}
                      <Squiggle $tone="#3d8fe0" $at="90%"><Hanja>發明</Hanja></Squiggle>
                    </TextLine>
                    <TextLine>
                      <Squiggle $tone="#3d8fe0" $at="90%">품들은</Squiggle> 우리의 삶을 혁신적으로 변화시켰습니다. 이러한 <Hanja>發明</Hanja>
                    </TextLine>
                    <TextLine>들은 인간의 생활을 더욱 편리하고 효율적으로 만들어주었으</TextLine>
                    <TextLine $short>며, 현대 문명의 발전을 이끌어왔습니다.</TextLine>
                  </Paragraph>
                </TextColumn>
              </Page>
            </Canvas>
          </Workspace>

          <TabStrip>
            <TabGroup>
              <IconButton type="button" $w={36} $h={34} aria-label="문서 탭 목록">
                <svg width="15" height="18" viewBox="0 0 15 18" fill="none" stroke={color.icon} strokeWidth="1.5">
                  <path d="M1 15V1H14V14H7M1 16H7V14" />
                </svg>
              </IconButton>
              <Divider $h={30} $l={2} $r={5} />
              <IconButton type="button" $w={32} $h={36} aria-label="처음 탭"><NavArrow dir="left" end /></IconButton>
              <IconButton type="button" $w={28} $h={36} aria-label="이전 탭"><NavArrow dir="left" /></IconButton>
              <IconButton type="button" $w={32} $h={36} aria-label="다음 탭"><NavArrow dir="right" /></IconButton>
              <IconButton type="button" $w={30} $h={36} aria-label="마지막 탭"><NavArrow dir="right" end /></IconButton>
              <DocTab type="button">블로그 한글강좌</DocTab>
              <AddTab type="button" aria-label="새 탭">
                <svg width="14" height="14" viewBox="0 0 14 14" stroke="#66656a" strokeWidth="1.4"><path d="M7 0V14M0 7H14" /></svg>
              </AddTab>
            </TabGroup>
            <ScrollRow>
              <Grip />
              <HScroll>
                <IconButton type="button" $w={20} $h={19} aria-label="왼쪽으로"><Chevron dir="left" size={12} tone="#bab9be" /></IconButton>
                <IconButton type="button" $w={20} $h={19} aria-label="오른쪽으로"><Chevron dir="right" size={12} tone="#bab9be" /></IconButton>
              </HScroll>
              <SplitHandle type="button" aria-label="가로 나누기">
                <svg width="2" height="14"><rect width="1" height="14" fill="#66656a" /></svg>
              </SplitHandle>
            </ScrollRow>
          </TabStrip>

          <StatusBar>
            <StatusList>
              {status.map((s) => <StatusText key={s}>{s}</StatusText>)}
              <StatusText $link>변경 내용 [기록 중지]</StatusText>
              <StatusText>타수 : 999타</StatusText>
            </StatusList>
            <StatusTools>
              <ViewButton type="button" $on aria-label="쪽 윤곽">
                <GlyphSquare><path d="M4 17V4H14V17" stroke={color.ink} strokeWidth="1.4" /></GlyphSquare>
              </ViewButton>
              <ViewButton type="button" aria-label="폭 맞춤">
                <GlyphSquare><path d="M2 8.5H16M5 5.5L2 8.5L5 11.5M13 5.5L16 8.5L13 11.5" stroke={color.ink} strokeWidth="1.3" /></GlyphSquare>
              </ViewButton>
              <ViewButton type="button" aria-label="쪽 맞춤">
                <GlyphSquare><rect x="3" y="3" width="12" height="12" stroke={color.ink} strokeWidth="1.3" /></GlyphSquare>
              </ViewButton>
              <ViewButton type="button" $w={62} aria-label="축소">
                <GlyphSquare><rect x="6" y="6" width="6" height="6" fill="#a3a2a7" stroke={color.icon} /></GlyphSquare>
              </ViewButton>
              <ZoomSlider type="range" min="0" max="200" defaultValue="105" aria-label="확대 비율" />
              <ViewButton type="button" $w={36} aria-label="확대">
                <GlyphSquare><rect x="3.5" y="3.5" width="11" height="11" fill="#c3c2c7" stroke={color.icon} /></GlyphSquare>
              </ViewButton>
              <ViewButton type="button" aria-label="확대/축소">
                <svg width="18" height="18" viewBox="0 0 18 18" fill="none" stroke="#8a898e" strokeWidth="1.5">
                  <circle cx="7" cy="7" r="6" />
                  <path d="M11.5 11.5L17 17" strokeWidth="2" />
                </svg>
              </ViewButton>
              <ZoomLabel>125%</ZoomLabel>
            </StatusTools>
          </StatusBar>
        </Window>
      </Desktop>
    </>
  );
}
